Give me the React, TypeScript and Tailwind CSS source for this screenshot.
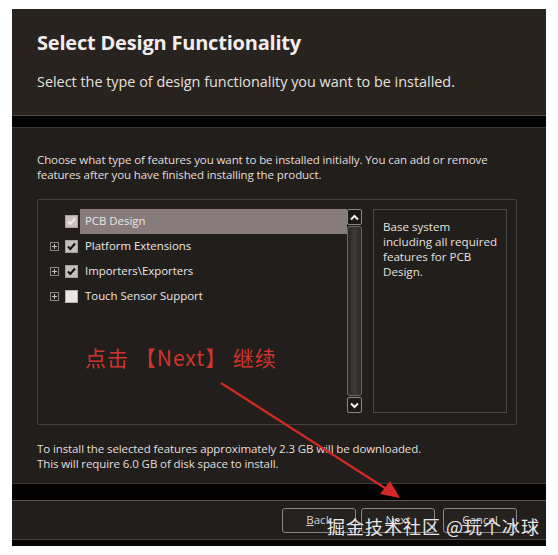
import React from "react";

const font = { fontFamily: '"Open Sans", "Noto Sans", sans-serif' };

function Check({ state }: { state: "gray" | "on" | "off" }) {
  if (state === "off") {
    return <div className="w-[13px] h-[13px] bg-[#ece6e6] border border-[#b8b0b0]" />;
  }
  const fill = state === "gray" ? "bg-[#c9c1c1]" : "bg-[#c4bebe]";
  const stroke = state === "gray" ? "#eee8e8" : "#111";
  return (
    <div className={`w-[13px] h-[13px] ${fill} border border-[#a8a0a0] flex items-center justify-center`}>
      <svg width="11" height="11" viewBox="0 0 11 11">
        <path d="M2 5.5 L4.3 8 L9 2.5" fill="none" stroke={stroke} strokeWidth="2" />
      </svg>
    </div>
  );
}

function Expander({ show }: { show: boolean }) {
  if (!show) return <div className="w-[9px] h-[9px]" />;
  return (
    <div className="w-[9px] h-[9px] border border-[#8d8585] flex items-center justify-center">
      <svg width="7" height="7" viewBox="0 0 7 7">
        <path d="M1 3.5 H6 M3.5 1 V6" stroke="#c8c0c0" strokeWidth="1" />
      </svg>
    </div>
  );
}

function Row({ label, state, expand, selected }: { label: string; state: "gray" | "on" | "off"; expand: boolean; selected?: boolean }) {
  return (
    <div className="h-[25px] flex items-center">
      <div className="w-[5px]" />
      <Expander show={expand} />
      <div className="w-[6px]" />
      <Check state={state} />
      <div className={`ml-[2px] h-[25px] flex-1 flex items-center pl-[5px] pb-[2px] ${selected ? "bg-[#867c7b]" : ""}`}>
        <span className="text-[11.4px] text-[#ece6e4]">{label}</span>
      </div>
    </div>
  );
}

function ScrollBtn({ up }: { up: boolean }) {
  return (
    <div className="w-[15px] h-[16px] rounded-[2px] border border-[#8c8686] bg-[#1c1919] flex items-center justify-center">
      <svg width="9" height="7" viewBox="0 0 9 7">
        <path d={up ? "M1 5.5 L4.5 2 L8 5.5" : "M1 1.5 L4.5 5 L8 1.5"} fill="none" stroke="#f4f0f0" strokeWidth="2" />
      </svg>
    </div>
  );
}

function Btn({ u, rest }: { u: string; rest: string }) {
  return (
    <div className="w-[74px] h-[25px] rounded-[3px] border border-[#8a8585] bg-[#262220] flex items-center justify-center text-[11.5px] text-[#d8d2d0]">
      <span>
        <span className="underline">{u}</span>
        {rest}
      </span>
    </div>
  );
}

export default function App() {
  return (
    <div className="w-[558px] h-[555px] bg-white relative overflow-hidden" style={font}>
      <div className="pt-[9px] pl-[12px]">
        <div className="w-[534px] h-[537px] flex flex-col">
          {/* header */}
          <div className="h-[106px] bg-[#28231f] px-[25px] pt-[20px]">
            <div className="text-[20px] font-bold text-[#f2ecec] leading-[28px] tracking-[-0.2px]">Select Design Functionality</div>
            <div className="mt-[15px] text-[14.4px] text-[#e6e0de] leading-[20px]">Select the type of design functionality you want to be installed.</div>
          </div>
          <div className="h-[12px] bg-[#030303] border-t border-[#4e4a48]" />
          {/* body */}
          <div className="h-[356px] bg-[#221e1c] border-t border-[#3a3634] px-[25px] pt-[24px]">
            <div className="text-[11.5px] leading-[15px] text-[#e4dedc] tracking-[-0.1px]">
              Choose what type of features you want to be installed initially. You can add or remove
              <br />
              features after you have finished installing the product.
            </div>
            <div className="mt-[17px] w-[480px] h-[226px] border border-[#46403e] rounded-[2px] pt-[9px] pl-[7px] pr-[9px] flex">
              <div className="w-[302px] h-[204px] flex flex-col">
                <Row label="PCB Design" state="gray" expand={false} selected />
                <Row label="Platform Extensions" state="on" expand />
                <Row label="Importers\Exporters" state="on" expand />
                <Row label="Touch Sensor Support" state="off" expand />
              </div>
              <div className="w-[15px] h-[204px] flex flex-col">
                <ScrollBtn up />
                <div className="flex-1 py-[1px]">
                  <div className="h-full rounded-[3px] border border-[#6e6868] bg-gradient-to-r from-[#2a2626] via-[#403b3a] to-[#2a2626]" />
                </div>
                <ScrollBtn up={false} />
              </div>
              <div className="ml-[11px] w-[134px] h-[204px] border border-[#4c4644] pl-[9px] pt-[9px] text-[11.6px] leading-[15px] text-[#e6e0de] whitespace-nowrap">
                Base system
                <br />
                including all required
                <br />
                features for PCB
                <br />
                Design.
              </div>
            </div>
            <div className="mt-[16px] text-[11.5px] leading-[15px] text-[#e4dedc] tracking-[-0.1px]">
              To install the selected features approximately 2.3 GB will be downloaded.
              <br />
              This will require 6.0 GB of disk space to install.
            </div>
          </div>
          <div className="h-[17px] bg-[#030303] border-t border-[#3e3a38]" />
          {/* buttons */}
          <div className="h-[39px] bg-[#221e1c] border-t border-[#5a5654] flex items-center justify-end pr-[29px] gap-[5px]">
            <Btn u="B" rest="ack" />
            <Btn u="N" rest="ext" />
            <div className="ml-[3px]">
              <Btn u="C" rest="ancel" />
            </div>
          </div>
          <div className="flex-1 bg-[#050505] border-t border-[#4a4644]" />
        </div>
      </div>

      {/* annotation overlay */}
      <div
        className="absolute left-[85px] top-[343px] text-[21px] text-[#d0342c] leading-[28px] whitespace-pre tracking-[1px]"
        style={{ fontFamily: '"Noto Sans CJK SC", "Open Sans", sans-serif' }}
      >
        点击 【Next】 继续
      </div>
      <svg className="absolute left-0 top-0 pointer-events-none" width="558" height="555" viewBox="0 0 558 555">
        <line x1="221" y1="383" x2="388" y2="490" stroke="#d42826" strokeWidth="2.2" />
        <path d="M400 498 L380 494 L390 481 Z" fill="#d42826" />
      </svg>
      <div
        className="absolute left-[327px] top-[514px] text-[18px] leading-[25px] text-[#e8e6e6] tracking-[1px]"
        style={{ fontFamily: '"Noto Sans CJK SC", "Noto Sans", sans-serif' }}
      >
        掘金技术社区 @玩个冰球
      </div>
    </div>
  );
}
